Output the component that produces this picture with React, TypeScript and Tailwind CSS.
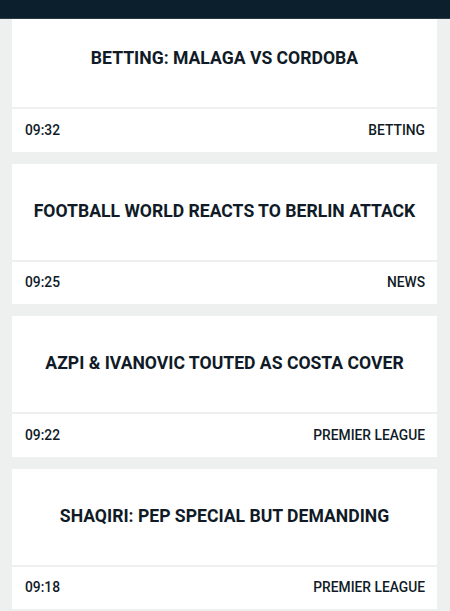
const posts = [
  { title: "BETTING: MALAGA VS CORDOBA", time: "09:32", category: "BETTING" },
  { title: "FOOTBALL WORLD REACTS TO BERLIN ATTACK", time: "09:25", category: "NEWS" },
  { title: "AZPI & IVANOVIC TOUTED AS COSTA COVER", time: "09:22", category: "PREMIER LEAGUE" },
  { title: "SHAQIRI: PEP SPECIAL BUT DEMANDING", time: "09:18", category: "PREMIER LEAGUE" },
];

export default function App() {
  return (
    <div className="min-h-screen bg-[#eeefef] font-['Roboto',sans-serif] text-[#101b27]">
      {/* Header */}
      <div className="fixed top-0 left-0 right-0 z-10 h-[19px] bg-[#0b1f2c] border-b border-[#2a3a45]" />

      {/* Feed */}
      <div className="flex flex-col gap-[12px] pt-[11px] pl-[12px] pr-[13px] pb-[12px]">
        {posts.map((post, index) => (
          <article key={index} className="flex flex-col bg-white">
            <div className="flex h-[98px] items-center justify-center border-b-2 border-[#eeefef] px-4">
              <h2 className="text-center text-[17.6px] font-bold leading-tight">{post.title}</h2>
            </div>
            <div className="flex h-[42.5px] items-center justify-between pl-[13px] pr-[12px] text-[13.8px] font-medium">
              <span>{post.time}</span>
              <span>{post.category}</span>
            </div>
          </article>
        ))}
      </div>
    </div>
  );
}
